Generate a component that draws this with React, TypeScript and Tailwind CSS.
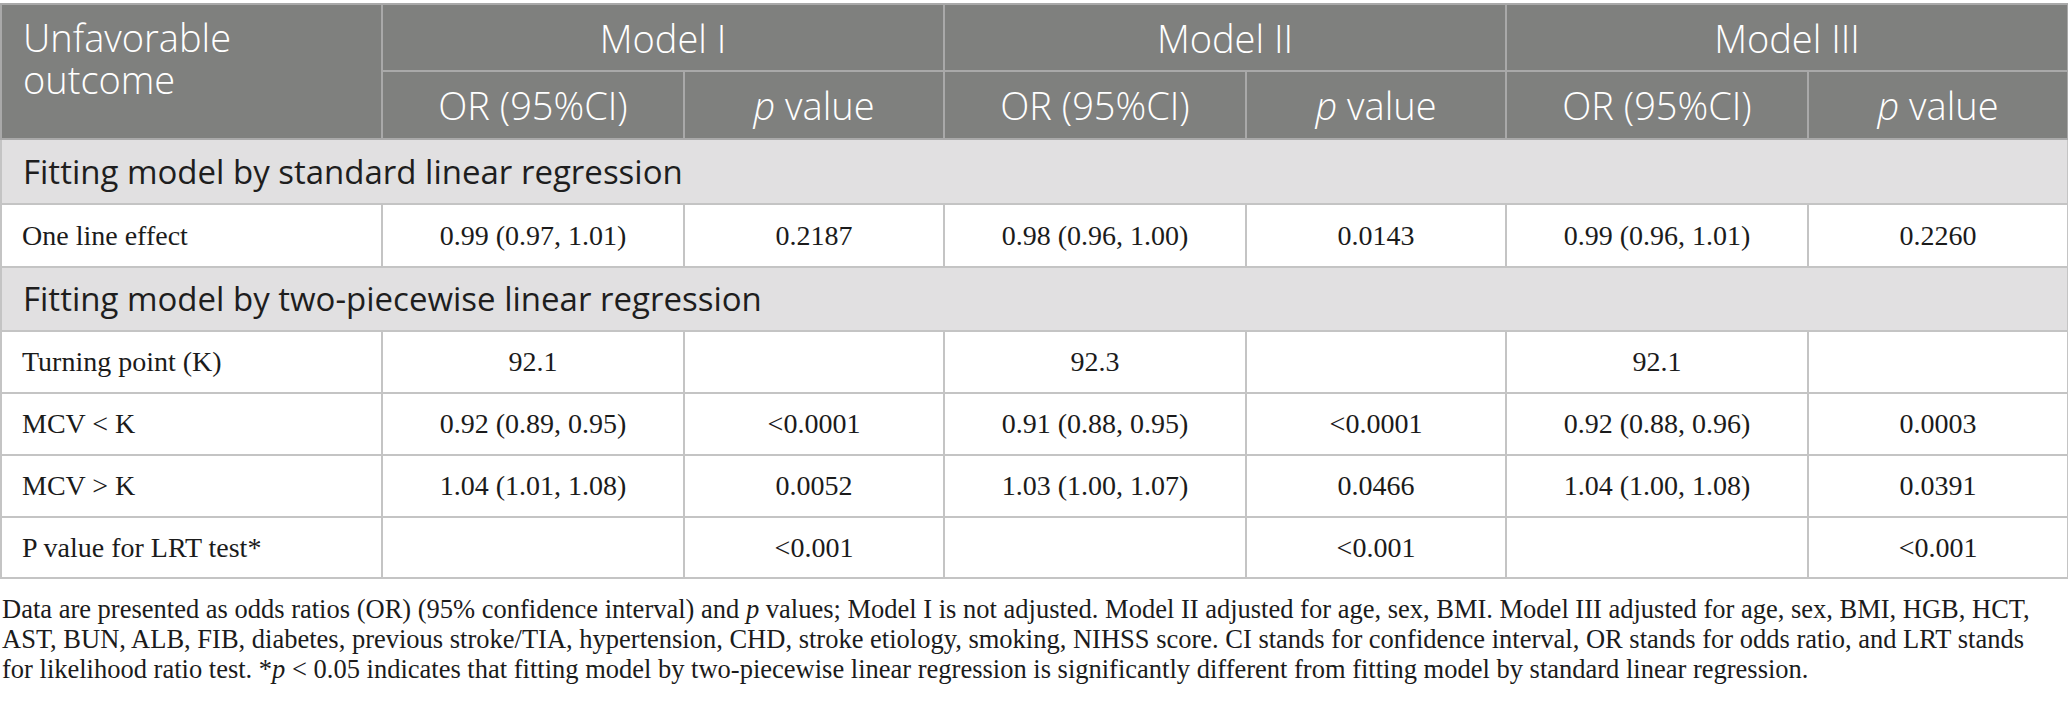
import React from "react";

const H = "border-2 border-[#a9a9a9] font-['Open_Sans',sans-serif] font-light text-white text-[38px] leading-[44px] text-center align-middle";
const TD = "border-2 border-[#c4c4c4] font-['Liberation_Serif',serif] text-[28px] leading-[32px] text-[#1b1b1b] text-center align-middle";
const TD1 = "border-2 border-[#c4c4c4] font-['Liberation_Serif',serif] text-[28px] leading-[32px] text-[#1b1b1b] text-left pl-[20px] align-middle";
const SEC = "border-2 border-[#c4c4c4] bg-[#e1e0e1] font-['Open_Sans',sans-serif] text-[33px] leading-[40px] text-[#1e1e1e] text-left pl-[21px] align-middle";

type Row = [string, string, string, string, string, string, string];

const rows1: Row[] = [["One line effect", "0.99 (0.97, 1.01)", "0.2187", "0.98 (0.96, 1.00)", "0.0143", "0.99 (0.96, 1.01)", "0.2260"]];
const rows2: { cells: Row; h: string }[] = [
  { cells: ["Turning point (K)", "92.1", "", "92.3", "", "92.1", ""], h: "h-[62px]" },
  { cells: ["MCV < K", "0.92 (0.89, 0.95)", "<0.0001", "0.91 (0.88, 0.95)", "<0.0001", "0.92 (0.88, 0.96)", "0.0003"], h: "h-[62px]" },
  { cells: ["MCV > K", "1.04 (1.01, 1.08)", "0.0052", "1.03 (1.00, 1.07)", "0.0466", "1.04 (1.00, 1.08)", "0.0391"], h: "h-[62px]" },
  { cells: ["P value for LRT test*", "", "<0.001", "", "<0.001", "", "<0.001"], h: "h-[61px]" },
];

function DataRow({ cells, h }: { cells: Row; h: string }) {
  return (
    <tr className={h}>
      {cells.map((c, i) => (
        <td key={i} className={i === 0 ? TD1 : TD}>
          {c}
        </td>
      ))}
    </tr>
  );
}

export default function App() {
  return (
    <div className="w-[2068px] h-[708px] bg-white pt-[3px] overflow-hidden">
      <table className="w-[2067px] border-collapse table-fixed">
        <colgroup>
          <col className="w-[381px]" />
          <col className="w-[302px]" />
          <col className="w-[260px]" />
          <col className="w-[302px]" />
          <col className="w-[260px]" />
          <col className="w-[302px]" />
          <col className="w-[260px]" />
        </colgroup>
        <thead className="bg-[#7f807e]">
          <tr className="h-[67px]">
            <th rowSpan={2} className="border-2 border-[#a9a9a9] font-['Open_Sans',sans-serif] font-light text-white text-[38px] leading-[42px] text-left align-top pl-[21px] pt-[11px]">
              Unfavorable
              <br />
              outcome
            </th>
            <th colSpan={2} className={H}>Model I</th>
            <th colSpan={2} className={H}>Model II</th>
            <th colSpan={2} className={H}>Model III</th>
          </tr>
          <tr className="h-[68px]">
            <th className={H}>OR (95%CI)</th>
            <th className={H}><i>p</i> value</th>
            <th className={H}>OR (95%CI)</th>
            <th className={H}><i>p</i> value</th>
            <th className={H}>OR (95%CI)</th>
            <th className={H}><i>p</i> value</th>
          </tr>
        </thead>
        <tbody>
          <tr className="h-[65px]">
            <td colSpan={7} className={SEC}>Fitting model by standard linear regression</td>
          </tr>
          {rows1.map((r, i) => (
            <DataRow key={i} cells={r} h="h-[63px]" />
          ))}
          <tr className="h-[64px]">
            <td colSpan={7} className={SEC}>Fitting model by two-piecewise linear regression</td>
          </tr>
          {rows2.map((r, i) => (
            <DataRow key={i} cells={r.cells} h={r.h} />
          ))}
        </tbody>
      </table>
      <p className="mt-[15px] pl-[2px] font-['Liberation_Serif',serif] text-[26.5px] leading-[30px] text-[#1b1b1b] whitespace-nowrap">
        Data are presented as odds ratios (OR) (95% confidence interval) and <i>p</i> values; Model I is not adjusted. Model II adjusted for age, sex, BMI. Model III adjusted for age, sex, BMI, HGB, HCT,
        <br />
        AST, BUN, ALB, FIB, diabetes, previous stroke/TIA, hypertension, CHD, stroke etiology, smoking, NIHSS score. CI stands for confidence interval, OR stands for odds ratio, and LRT stands
        <br />
        for likelihood ratio test. *<i>p</i> &lt; 0.05 indicates that fitting model by two-piecewise linear regression is significantly different from fitting model by standard linear regression.
      </p>
    </div>
  );
}
